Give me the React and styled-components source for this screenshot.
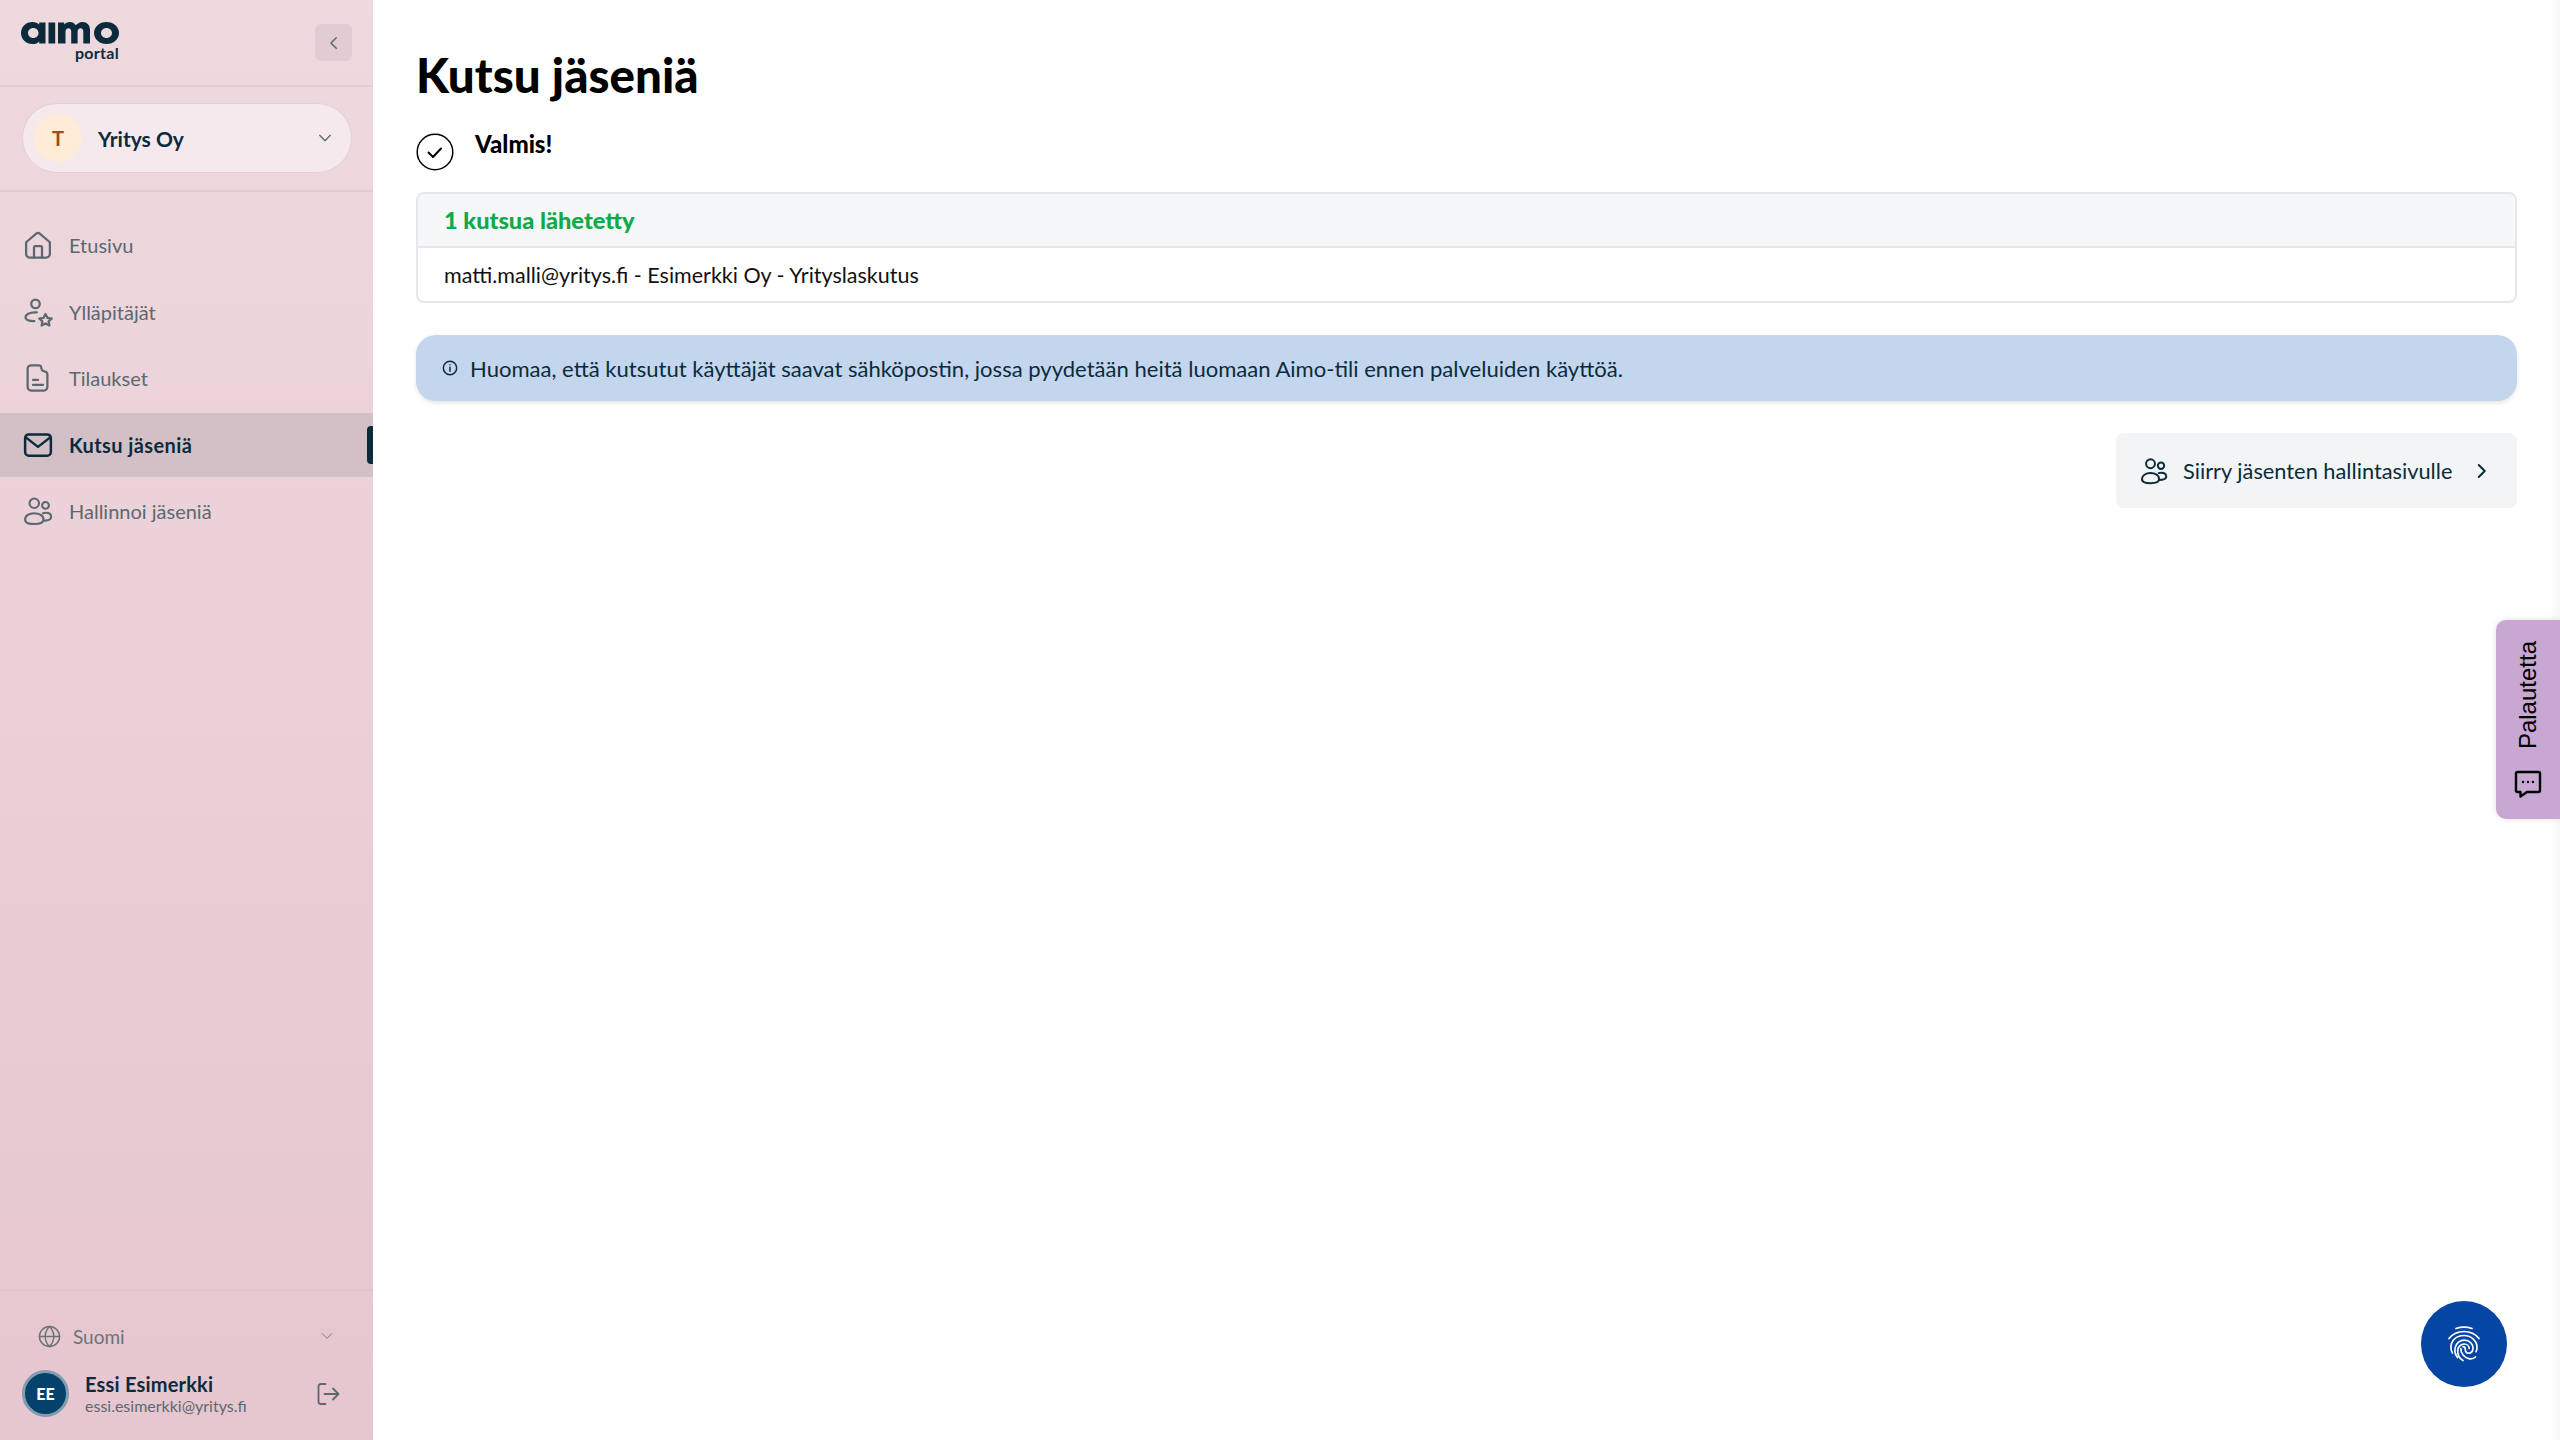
import React from 'react';
import styled, { createGlobalStyle } from 'styled-components';

const Global = createGlobalStyle`
  html, body { margin: 0; padding: 0; background: #fff; }
  body { font-family: Lato, "Open Sans", sans-serif; color: #0b2b3c; }
  * { box-sizing: border-box; }
`;

const Page = styled.div`
  display: flex;
  height: 1440px;
  width: 2560px;
  overflow: hidden;
  position: relative;
`;

const Sidebar = styled.aside`
  width: 373px;
  flex: none;
  display: flex;
  flex-direction: column;
  background: linear-gradient(180deg, #eed9de 0%, #e6c6cf 100%);
`;

const SideHead = styled.div`
  height: 87px;
  padding: 0 21px 0 21px;
  border-bottom: 2px solid #e5cdd3;
  display: flex;
  align-items: center;
  justify-content: space-between;
`;

const Logo = styled.div`
  display: flex;
  flex-direction: column;
  align-items: flex-end;
  width: 98px;
  margin-top: -3px;
`;

const LogoPortal = styled.span`
  font-size: 16px;
  line-height: 16px;
  font-weight: 700;
  letter-spacing: 0.3px;
  color: #0b2b3c;
`;

const Collapse = styled.button`
  width: 37px;
  height: 37px;
  border: 0;
  padding: 0;
  border-radius: 6px;
  background: #e0ccd2;
  color: #5b6870;
  display: flex;
  align-items: center;
  justify-content: center;
`;

const OrgWrap = styled.div`
  height: 105px;
  padding: 16px 21px 0 22px;
  border-bottom: 2px solid #e4ccd2;
`;

const OrgSelect = styled.div`
  height: 70px;
  border-radius: 35px;
  background: #f6e9ee;
  border: 1px solid #e2d0d6;
  display: flex;
  align-items: center;
  padding: 0 18px 0 11px;
  gap: 16px;
`;

const OrgBadge = styled.span`
  width: 48px;
  height: 48px;
  border-radius: 50%;
  background: #feecd6;
  color: #a2481a;
  font-weight: 700;
  font-size: 20px;
  display: flex;
  align-items: center;
  justify-content: center;
`;

const OrgName = styled.span`
  flex: 1;
  font-size: 21px;
  font-weight: 700;
  color: #0b2b3c;
`;

const MutedIcon = styled.span`
  display: flex;
  color: #5b6870;
`;

const Nav = styled.nav`
  display: flex;
  flex-direction: column;
  gap: 2.6px;
  padding-top: 21px;
  flex: 1;
`;

const NavItem = styled.a`
  height: 64px;
  display: flex;
  align-items: center;
  gap: 16px;
  padding-left: 23px;
  position: relative;
  font-size: 20px;
  font-weight: ${p => (p.$active ? 700 : 400)};
  letter-spacing: ${p => (p.$active ? '0.4px' : '0')};
  color: ${p => (p.$active ? '#0b2b3c' : '#5b6870')};
  background: ${p => (p.$active ? '#d3c0c7' : 'transparent')};
  ${p => p.$active && `
    &::after {
      content: '';
      position: absolute;
      right: 0;
      top: 13px;
      width: 6px;
      height: 38px;
      border-radius: 4px 0 0 4px;
      background: #0b2b3c;
    }
  `}
`;

const SideFoot = styled.div`
  border-top: 2px solid #e0c4cc;
  height: 151px;
  padding: 29px 22px 0 22px;
  display: flex;
  flex-direction: column;
`;

const LangRow = styled.div`
  height: 32px;
  display: flex;
  align-items: center;
  gap: 12px;
  padding: 0 17px 0 16px;
  font-size: 19px;
  color: #6b7379;
  span { flex: 1; }
`;

const UserRow = styled.div`
  display: flex;
  align-items: center;
  margin-top: 18px;
  padding-right: 11px;
`;

const UserAvatar = styled.span`
  width: 47px;
  height: 47px;
  border-radius: 50%;
  background: #05426b;
  border: 3px solid #7f9cb0;
  color: #fff;
  font-size: 16px;
  font-weight: 900;
  display: flex;
  align-items: center;
  justify-content: center;
  flex: none;
`;

const UserText = styled.div`
  flex: 1;
  margin-left: 16px;
  display: flex;
  flex-direction: column;
`;

const UserName = styled.span`
  font-size: 20px;
  line-height: 24px;
  font-weight: 700;
  letter-spacing: 0.2px;
  color: #0b2b3c;
`;

const UserMail = styled.span`
  font-size: 16px;
  line-height: 20px;
  color: #5b6870;
`;

const Main = styled.main`
  flex: 1;
  padding: 0 43px;
`;

const Title = styled.h1`
  margin: 47px 0 0;
  font-size: 47.5px;
  line-height: 56px;
  font-weight: 900;
  color: #000;
`;

const Done = styled.div`
  display: flex;
  margin-top: 27px;
  gap: 21px;
`;

const DoneCheck = styled.svg`
  flex: none;
  margin-top: 3px;
`;

const DoneText = styled.span`
  font-size: 24px;
  line-height: 28px;
  font-weight: 900;
  color: #000;
`;

const Card = styled.div`
  margin-top: 21px;
  border: 2px solid #e4e8ec;
  border-radius: 8px;
  overflow: hidden;
`;

const CardHead = styled.div`
  height: 54px;
  background: #f6f7f9;
  border-bottom: 2px solid #e4e8ec;
  padding-left: 26px;
  display: flex;
  align-items: center;
  font-size: 23.6px;
  font-weight: 900;
  color: #0bab47;
`;

const CardBody = styled.div`
  height: 53px;
  padding-left: 26px;
  display: flex;
  align-items: center;
  font-size: 21.5px;
  color: #111;
`;

const Alert = styled.div`
  margin-top: 32px;
  height: 66px;
  border-radius: 20px;
  background: #c3d6ed;
  box-shadow: 0 2px 4px rgba(20, 40, 60, 0.12);
  display: flex;
  align-items: center;
  gap: 12px;
  padding-left: 26px;
  font-size: 22.05px;
  color: #0b2b3c;
`;

const ActionRow = styled.div`
  display: flex;
  justify-content: flex-end;
  margin-top: 32px;
`;

const ActionButton = styled.button`
  width: 401px;
  height: 75px;
  border: 0;
  border-radius: 8px;
  background: #f2f4f6;
  color: #0b2b3c;
  font: inherit;
  font-size: 21.8px;
  display: flex;
  align-items: center;
  padding: 0 27px 0 24px;
  gap: 15px;
  span { flex: 1; text-align: left; white-space: nowrap; }
`;

const EdgeShade = styled.div`
  position: absolute;
  right: 0;
  top: 0;
  bottom: 0;
  width: 10px;
  background: linear-gradient(90deg, rgba(0, 0, 0, 0), rgba(0, 0, 0, 0.03));
`;

const Feedback = styled.div`
  position: absolute;
  right: 0;
  top: 620px;
  width: 64px;
  height: 199px;
  background: #c8a8d2;
  border-radius: 10px 0 0 10px;
  box-shadow: 0 0 6px rgba(0, 0, 0, 0.12);
  display: flex;
  flex-direction: column;
  align-items: center;
  justify-content: space-between;
  padding: 21px 0 21px;
`;

const FeedbackLabel = styled.span`
  writing-mode: vertical-rl;
  transform: rotate(180deg);
  font-family: "Liberation Sans", Arial, sans-serif;
  font-size: 24px;
  color: #000;
`;

const Fab = styled.button`
  position: absolute;
  left: 2421px;
  top: 1301px;
  width: 86px;
  height: 86px;
  border: 0;
  padding: 0;
  border-radius: 50%;
  background: #0546a5;
  display: flex;
  align-items: center;
  justify-content: center;
`;

const IconSvg = styled.svg`
  flex: none;
`;

const Ico = ({ size = 30, sw = 2, children }) => (
  <IconSvg width={size} height={size} viewBox="0 0 24 24" fill="none" stroke="currentColor" strokeWidth={sw} strokeLinecap="round" strokeLinejoin="round">
    {children}
  </IconSvg>
);

const HomeIcon = () => (
  <Ico sw={1.8}>
    <path d="M2.5 9.8 10.6 2.9a2.2 2.2 0 0 1 2.8 0l8.1 6.9v9.4a2.8 2.8 0 0 1-2.8 2.8H5.3a2.8 2.8 0 0 1-2.8-2.8z" />
    <path d="M8.800 22v-8.200a1 1 0 0 1 1-1h4.400a1 1 0 0 1 1 1V22" />
  </Ico>
);
const AdminIcon = () => (
  <Ico sw={1.8}>
    <circle cx="10" cy="5.500" r="3.400" />
    <path d="M11 12.300H9.500C5.500 12.300 2 14 2 16.200S4.700 19.300 9 19.300" />
    <path d="m18 13.600 1.600 3.100 3.400.5-2.500 2.300.6 3.300-3.100-1.600-3.100 1.600.6-3.300-2.500-2.300 3.400-.5z" />
  </Ico>
);
const DocIcon = () => (
  <Ico sw={1.8}>
    <path d="M6.500 1.800h6.200c.6 0 1 .2 1.400.6.7.8.5 2.600 1.200 3.400.9 1 2.800.8 3.700 1.800.3.3.5.8.5 1.400v10.200a2.800 2.800 0 0 1-2.800 2.800H6.500a2.800 2.800 0 0 1-2.800-2.800V4.600a2.800 2.800 0 0 1 2.800-2.800z" />
    <path d="M8 13.500h4M8 17.500h8" />
  </Ico>
);
const MailIcon = () => (
  <Ico sw={2}>
    <rect x="1.700" y="3.500" width="20.600" height="17" rx="3" />
    <path d="m3 6.500 9 7 9-7" />
  </Ico>
);
const UsersIcon = ({ size = 30 }) => (
  <Ico size={size} sw={1.7}>
    <circle cx="9" cy="5.800" r="3.800" />
    <circle cx="18" cy="7.500" r="2.700" />
    <path d="M1.700 18.800c0-3 3.200-5 7.300-5s7.400 2 7.400 5-3.300 3.600-7.400 3.600-7.300-.6-7.300-3.600z" />
    <path d="M16 13.800c.8-.3 1.500-.4 2.300-.4 2.500 0 4.200 1.300 4.200 3.300s-2 3-6.400 3" />
  </Ico>
);
const CheckCircle = () => (
  <DoneCheck width="38" height="38" viewBox="0 0 38 38" fill="none" stroke="#000" strokeWidth="1.500" strokeLinecap="round" strokeLinejoin="round">
    <circle cx="19" cy="19" r="17.800" />
    <path d="m12.500 19.500 4.500 4.500 8-8.500" strokeWidth="2" />
  </DoneCheck>
);
const InfoIcon = () => (
  <Ico size={16} sw={2.200}>
    <circle cx="12" cy="12" r="10" />
    <path d="M12 11v6M12 7.200v.1" />
  </Ico>
);
const Globe = () => (
  <Ico size={23} sw={1.500}>
    <circle cx="12" cy="12" r="10.500" />
    <path d="M1.500 12h21M12 1.500c3 3 4.500 6.500 4.500 10.500S15 19.500 12 22.500c-3-3-4.500-6.500-4.500-10.500S9 4.500 12 1.500z" />
  </Ico>
);
const Logout = () => (
  <Ico size={24} sw={1.800}>
    <path d="M9.500 2H5a2.500 2.500 0 0 0-2.500 2.500v15A2.500 2.500 0 0 0 5 22h4.500" />
    <path d="M8.500 12h14M17 6.500l5.500 5.500-5.500 5.500" />
  </Ico>
);
const Chevron = ({ dir, size = 18, sw = 2 }) => (
  <Ico size={size} sw={sw}>
    {dir === 'left' && <path d="m15 5-7 7 7 7" />}
    {dir === 'right' && <path d="m9 4 8 8-8 8" />}
    {dir === 'down' && <path d="m4 8 8 8 8-8" />}
  </Ico>
);
const Speech = () => (
  <svg width="28" height="28" viewBox="0 0 28 28" fill="none" stroke="#000" strokeWidth="2.400" strokeLinejoin="round" strokeLinecap="round">
    <path d="M3.500 2h21a1.500 1.500 0 0 1 1.500 1.500v17a1.500 1.500 0 0 1-1.500 1.500H13l-6.500 4.500V22h-3A1.500 1.500 0 0 1 2 20.500v-17A1.500 1.500 0 0 1 3.500 2z" />
    <path d="M9 12v.1M14 12v.1M19 12v.1" />
  </svg>
);
const Fingerprint = () => (
  <svg width="32" height="37" viewBox="0 0 32 37" fill="none" stroke="#fff" strokeWidth="1.700" strokeLinecap="round">
    <path d="M8 2.500c5-1.700 11-1.700 16 0" />
    <path d="M1 12.500C5 7.500 10 5.500 16 5.500s11 2 15 7" />
    <path d="M4.500 27C2 23 2.500 17.500 5.500 14c2.500-3 6.500-4.500 10.500-4.500 7.500 0 13 5.500 13 12 0 1.500-.3 3-1 4.200" />
    <path d="M9.500 31.500C6.500 28 5.800 22.500 8.500 18.500c1.800-2.700 4.500-4.300 8-4.300 5 0 8.500 3.800 8.500 8 0 2.800-2 5.300-4.500 5-2.300-.2-3.200-2-3.200-4 0-1.500-1-2.500-2.300-2.500" />
    <path d="M15 34.500c-3.500-2-5.500-6-5.300-10 .2-3.700 3-6.500 6.500-6.500 2.800 0 5 2 5 4.500" />
    <path d="M12.800 22.500c0 5 3.300 9.200 8 10.200 2.500.5 5-.1 6.700-1.700" />
  </svg>
);
const LogoSvg = () => (
  <svg width="98" height="24" viewBox="0 0 98 24" fill="#0b2b3c" role="img" aria-label="aimo">
    <path fillRule="evenodd" d="M11.500 1C5 1 0 5.800 0 12s5 11 11.500 11c3 0 5.200-1 6.700-2.600V22.500h6.300v-21h-6.300v2.100C16.700 2 14.500 1 11.500 1zm.8 6c3 0 5.200 2.200 5.200 5s-2.200 5-5.200 5-5.300-2.200-5.300-5 2.300-5 5.300-5z" />
    <rect x="27.500" y="1.500" width="6.700" height="21" />
    <path d="M37 22.500v-21h6.200v2c1.300-1.600 3.200-2.500 5.500-2.500 2.700 0 4.900 1.200 6 3.300C56 3 58.300 1 61.500 1 66 1 69 4 69 9v13.500h-6.700V10.500c0-2-1-3.300-2.700-3.300-1.800 0-3 1.300-3 3.300v12h-6.400v-12c0-2-1-3.300-2.700-3.300s-3 1.300-3 3.300v12z" />
    <path fillRule="evenodd" d="M85.500 1C78.500 1 73 5.800 73 12s5.500 11 12.500 11S98 18.200 98 12 92.500 1 85.500 1zm0 6c3 0 5.500 2.200 5.500 5s-2.500 5-5.500 5-5.500-2.200-5.500-5 2.500-5 5.500-5z" />
  </svg>
);

export default function App() {
  return (
    <Page>
      <Global />
      <Sidebar>
        <SideHead>
          <Logo>
            <LogoSvg />
            <LogoPortal>portal</LogoPortal>
          </Logo>
          <Collapse><Chevron dir="left" size={18} /></Collapse>
        </SideHead>
        <OrgWrap>
          <OrgSelect>
            <OrgBadge>T</OrgBadge>
            <OrgName>Yritys Oy</OrgName>
            <MutedIcon><Chevron dir="down" size={16} /></MutedIcon>
          </OrgSelect>
        </OrgWrap>
        <Nav>
          <NavItem><HomeIcon />Etusivu</NavItem>
          <NavItem><AdminIcon />Ylläpitäjät</NavItem>
          <NavItem><DocIcon />Tilaukset</NavItem>
          <NavItem $active><MailIcon />Kutsu jäseniä</NavItem>
          <NavItem><UsersIcon />Hallinnoi jäseniä</NavItem>
        </Nav>
        <SideFoot>
          <LangRow>
            <Globe />
            <span>Suomi</span>
            <Chevron dir="down" size={14} sw={1.500} />
          </LangRow>
          <UserRow>
            <UserAvatar>EE</UserAvatar>
            <UserText>
              <UserName>Essi Esimerkki</UserName>
              <UserMail>essi.esimerkki@yritys.fi</UserMail>
            </UserText>
            <MutedIcon><Logout /></MutedIcon>
          </UserRow>
        </SideFoot>
      </Sidebar>
      <Main>
        <Title>Kutsu jäseniä</Title>
        <Done>
          <CheckCircle />
          <DoneText>Valmis!</DoneText>
        </Done>
        <Card>
          <CardHead>1 kutsua lähetetty</CardHead>
          <CardBody>matti.malli@yritys.fi - Esimerkki Oy - Yrityslaskutus</CardBody>
        </Card>
        <Alert>
          <InfoIcon />
          Huomaa, että kutsutut käyttäjät saavat sähköpostin, jossa pyydetään heitä luomaan Aimo-tili ennen palveluiden käyttöä.
        </Alert>
        <ActionRow>
          <ActionButton>
            <UsersIcon size={28} />
            <span>Siirry jäsenten hallintasivulle</span>
            <Chevron dir="right" size={18} sw={2.600} />
          </ActionButton>
        </ActionRow>
      </Main>
      <EdgeShade />
      <Feedback>
        <FeedbackLabel>Palautetta</FeedbackLabel>
        <Speech />
      </Feedback>
      <Fab><Fingerprint /></Fab>
    </Page>
  );
}
